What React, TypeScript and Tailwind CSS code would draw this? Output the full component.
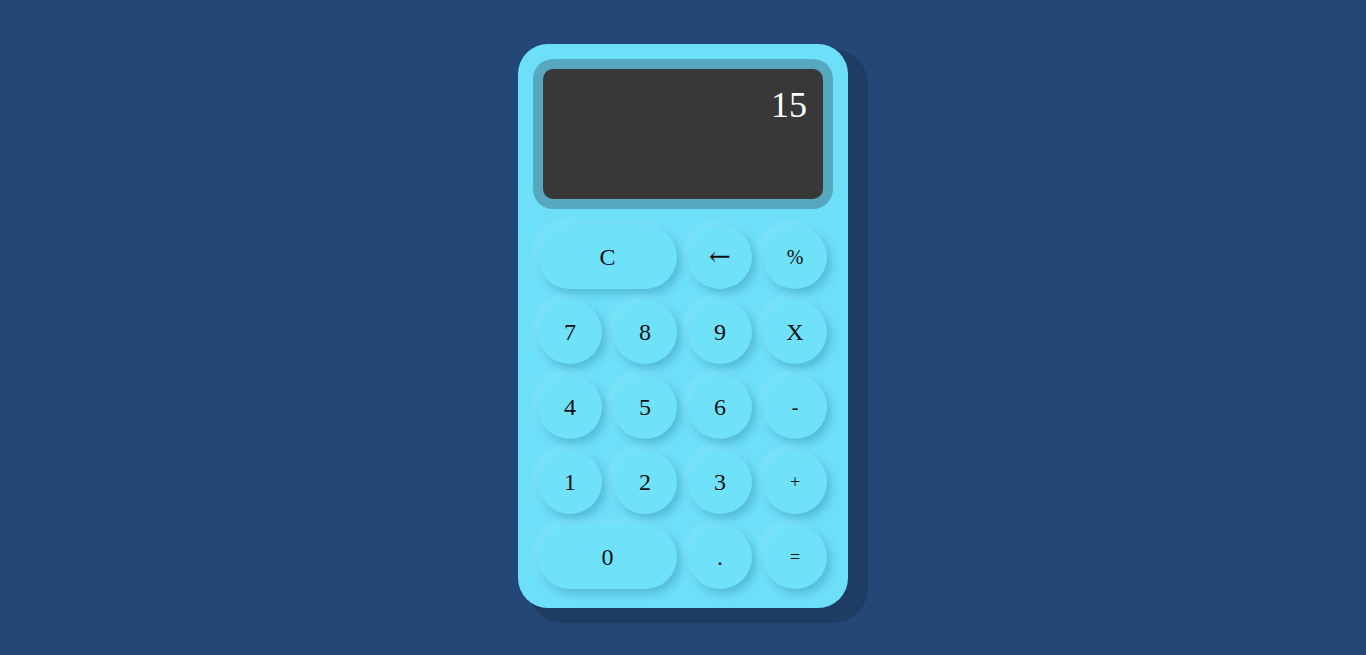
import React from "react";

const keys: { label: string; wide?: boolean; size: string }[] = [
  { label: "C", wide: true, size: "text-[24px]" },
  { label: "←", size: "text-[26px] font-['DejaVu_Serif',serif] pb-[2px]" },
  { label: "%", size: "text-[20px]" },
  { label: "7", size: "text-[24px]" },
  { label: "8", size: "text-[24px]" },
  { label: "9", size: "text-[24px]" },
  { label: "X", size: "text-[24px]" },
  { label: "4", size: "text-[24px]" },
  { label: "5", size: "text-[24px]" },
  { label: "6", size: "text-[24px]" },
  { label: "-", size: "text-[20px]" },
  { label: "1", size: "text-[24px]" },
  { label: "2", size: "text-[24px]" },
  { label: "3", size: "text-[24px]" },
  { label: "+", size: "text-[18px]" },
  { label: "0", wide: true, size: "text-[24px]" },
  { label: ".", size: "text-[24px]" },
  { label: "=", size: "text-[18px]" },
];

export default function App() {
  return (
    <div className="min-h-screen w-full bg-[#234876] flex justify-center pt-[44px] font-['Liberation_Serif',serif]">
      <div className="w-[330px] h-[564px] rounded-[30px] bg-[#6ddff8] shadow-[15px_10px_0_5px_#1f3d63] px-[15px] pt-[15px]">
        <div className="h-[150px] rounded-[20px] bg-[#55a8bd] p-[10px]">
          <div className="h-full rounded-[10px] bg-[#383838] text-right text-white text-[36px] pr-[16px] pt-[18px] leading-none">
            15
          </div>
        </div>
        <div className="grid grid-cols-[64px_64px_64px_64px] gap-x-[11px] gap-y-[11px] px-[5px] mt-[16px]">
          {keys.map((k, i) => (
            <button
              key={i}
              className={
                "h-[64px] rounded-full bg-[#6fe1f8] text-[#111] leading-none flex items-center justify-center shadow-[4px_5px_8px_rgba(0,60,90,0.22),-4px_-4px_8px_rgba(255,255,255,0.12)] " +
                (k.wide ? "col-span-2 " : "") +
                k.size
              }
            >
              {k.label}
            </button>
          ))}
        </div>
      </div>
    </div>
  );
}
